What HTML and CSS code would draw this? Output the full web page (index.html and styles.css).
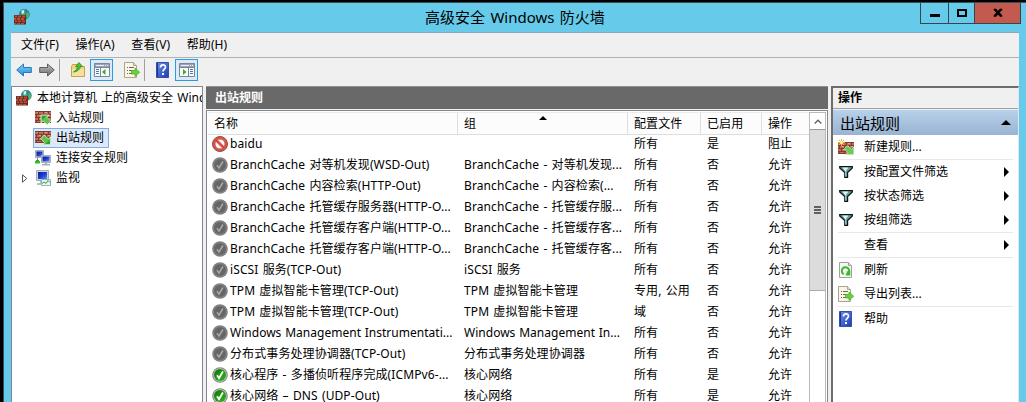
FILE: index.html
```html
<!DOCTYPE html>
<html lang="zh-CN">
<head>
<meta charset="utf-8">
<title>高级安全 Windows 防火墙</title>
<link rel="stylesheet" href="styles.css">
</head>
<body>
<svg class="defs" width="0" height="0">
  <defs>
    <linearGradient id="gGreen" x1="0" y1="0" x2="1" y2="1"><stop offset="0" stop-color="#0c6a08"/><stop offset=".5" stop-color="#1f9c10"/><stop offset="1" stop-color="#2fae1c"/></linearGradient>
    <linearGradient id="gBlue" x1="0" y1="0" x2="1" y2="1"><stop offset="0" stop-color="#6c92ee"/><stop offset="1" stop-color="#1d3cae"/></linearGradient>
    <linearGradient id="gScreen" x1="0" y1="0" x2="1" y2="1"><stop offset="0" stop-color="#0a1c9c"/><stop offset=".5" stop-color="#1a3ccc"/><stop offset="1" stop-color="#5e8cf0"/></linearGradient>
    <linearGradient id="gArrow" x1="0" y1="0" x2="0" y2="1"><stop offset="0" stop-color="#8ad4f8"/><stop offset="1" stop-color="#1c8ad8"/></linearGradient>
    <linearGradient id="gGray" x1="0" y1="0" x2="0" y2="1"><stop offset="0" stop-color="#bdbdbd"/><stop offset="1" stop-color="#6e6e6e"/></linearGradient>
    <symbol id="bricks" viewBox="0 0 16 12">
      <rect width="16" height="12" fill="#86392c"/>
      <path d="M0 1h3v2H0zM4 1h4v2H4zM9 1h4v2H9zM14 1h2v2h-2zM0 4h1v2H0zM2 4h4v2H2zM7 4h4v2H7zM12 4h4v2h-4zM0 7h3v2H0zM4 7h4v2H4zM9 7h4v2H9zM14 7h2v2h-2zM0 10h1v1H0zM2 10h4v1H2zM7 10h4v1H7zM12 10h4v1h-4z" fill="#b9705c"/>
      <path d="M2 1h1v1H2zM10 1h2v1h-2zM4 4h2v1H4zM5 7h2v1H5zM13 4h2v1h-2z" fill="#d9a48c"/>
    </symbol>
    <symbol id="firewall" viewBox="0 0 16 16">
      <circle cx="10.3" cy="5.4" r="5.1" fill="#2b7fc6" stroke="#2568a4" stroke-width=".5"/>
      <path d="M7 2c2-1.600 4-1.500 4.500-.8L10.600 3l1 1.500-2 1.800L7 5zM13 2.500l2 2v3l-1.500 2-1.500-2.500z" fill="#4cba3e"/>
      <path d="M7.500 1.800l2.500-.9v3L8 5z" fill="#d4f0f6"/>
      <path d="M0 6h12v9.500H0z" fill="#6e2a1e"/>
      <path d="M1 6.500h2v2H1zM4 6.500h3v2H4zM8 6.500h3v2H8zM0 9h2v2H0zM3 9h3v2H3zM7 9h3v2H7zM1 11.500h2v1.500H1zM4 11.500h3v1.500H4zM8 11.500h3v1.500H8zM0 14h2v1H0zM3 14h3v1H3zM7 14h3v1H7z" fill="#b0523d"/>
    </symbol>
    <symbol id="inbound" viewBox="0 0 16 16">
      <use href="#bricks" y="1" width="16" height="12"/>
      <path d="M6 5h8l-2.200 2.200 4 4-3.600 3.600-4-4L6 13z" fill="#5cc44a" stroke="#e4f4dc" stroke-width=".8"/>
      <path d="M7 6h4l-4 4z" fill="#2f9a2a"/>
    </symbol>
    <symbol id="outbound" viewBox="0 0 16 16">
      <use href="#bricks" y="1" width="16" height="12"/>
      <path d="M15.500 14.800h-8l2.200-2.200-4-4L9.300 5l4 4 2.200-2.200z" fill="#5cc44a" stroke="#e4f4dc" stroke-width=".8"/>
      <path d="M14.600 13.900h-4l4-4z" fill="#2f9a2a"/>
    </symbol>
    <symbol id="newrule" viewBox="0 0 16 16">
      <use href="#bricks" y="3" width="16" height="12"/>
      <path d="M15.700 15.700h-8l2.200-2.200-3.600-3.600 3.400-3.400 3.800 3.800 2.200-2.200z" fill="#66cc54" stroke="#e4f4dc" stroke-width=".7"/>
      <path d="M3.500 0v7M0 3.500h7M1 1l5 5M6 1L1 6" stroke="#f0b028"/><circle cx="3.500" cy="3.500" r="1.500" fill="#fff4a8"/>
    </symbol>
    <symbol id="connsec" viewBox="0 0 16 16">
      <path d="M.5.500h8v7h-8z" fill="#c6cad2" stroke="#aab"/><path d="M1.500 1.500h6v5h-6z" fill="url(#gScreen)"/>
      <path d="M6.500 5.500h9v7h-9z" fill="#d4d7de" stroke="#aab"/><path d="M7.500 6.500h7v5h-7z" fill="url(#gScreen)"/>
      <path d="M10 13h2v1h3v1.500H7V14h3z" fill="#a8acb4"/><path d="M0 11h5v2.500H0z" fill="#2fc02c"/><path d="M1 10h3v1H1z" fill="#27a824"/><path d="M2.500 8v2" stroke="#888"/>
    </symbol>
    <symbol id="monitor" viewBox="0 0 16 16">
      <path d="M1.500.500h12v10h-12z" fill="#d0d4dc" stroke="#a4aab6"/><path d="M3 2h9v7H3z" fill="url(#gScreen)"/>
      <path d="M5 11h4v2h2v2H2v-2h3z" fill="#b8bcc4"/>
      <path d="M6.500 9.500h9v6h-9z" fill="#eef6f8" stroke="#8fb4c4"/><path d="M7 13.500l2-1.500 2 1.500 2-3 2 2" fill="none" stroke="#28a828"/>
    </symbol>
    <symbol id="blocked" viewBox="0 0 16 16">
      <circle cx="8" cy="8" r="7.500" fill="#d8564a" stroke="#96483f"/><circle cx="8" cy="8" r="4.800" fill="#f4f2f2"/>
      <path d="M4 4l8 8" stroke="#dc4d40" stroke-width="2.600"/><circle cx="8" cy="8" r="5" fill="none" stroke="#a8483e" stroke-width=".5"/>
    </symbol>
    <symbol id="off" viewBox="0 0 16 16">
      <circle cx="8" cy="8" r="7.800" fill="#818181"/><circle cx="8" cy="8" r="6.200" fill="#666" stroke="#8d8d8d" stroke-width=".5"/>
      <path d="M5 8.300l2 2.900 3.900-6.700" fill="none" stroke="#aaa" stroke-width="1.500"/>
    </symbol>
    <symbol id="on" viewBox="0 0 16 16">
      <circle cx="8" cy="8" r="7.800" fill="#858585"/><circle cx="8" cy="8" r="6.700" fill="#ccc"/><circle cx="8" cy="8" r="6" fill="url(#gGreen)"/>
      <path d="M5 8.300l2 2.900 3.900-6.700" fill="none" stroke="#fff" stroke-width="1.800"/>
    </symbol>
    <symbol id="back" viewBox="0 0 16 14"><path d="M.7 7l6.800-6v3.500h7.800v5H7.500V13z" fill="url(#gArrow)" stroke="#2878b8"/></symbol>
    <symbol id="forward" viewBox="0 0 16 14"><path d="M15.300 7L8.500 1v3.500H.7v5h7.800V13z" fill="url(#gGray)" stroke="#606060"/></symbol>
    <symbol id="folder" viewBox="0 0 16 16">
      <path d="M1.500 4.500l1-2h5l1 2h6v10h-13z" fill="#efd381" stroke="#c7a34b"/><path d="M2 7h12v7H2z" fill="#f5e0a0"/>
      <path d="M3.500 10c2-1 3.500-3 4-5.500H5.500L9 .5l3.500 4h-2C10 7.500 7 10 3.500 10z" fill="#48be30" stroke="#238a18" stroke-width=".7"/>
    </symbol>
    <symbol id="treepane" viewBox="0 0 16 14">
      <path d="M.5.500h15v13H.5z" fill="#fafafa" stroke="#7e8592"/><path d="M1 1h14v3H1z" fill="#9aa4b4"/><path d="M2 2.500h8M11 2.500h1M13 2.500h1" stroke="#eef"/><path d="M1 4.500h14M6.500 5v8" stroke="#7e8592"/>
      <path d="M2 6.500h3M2 8.500h3M2 10.500h3" stroke="#4878b0"/><path d="M11.500 6v6L8 9z" fill="#36ac28"/>
    </symbol>
    <symbol id="actionpane" viewBox="0 0 16 14">
      <path d="M.5.500h15v13H.5z" fill="#fafafa" stroke="#7e8592"/><path d="M1 1h14v3H1z" fill="#9aa4b4"/><path d="M2 2.500h8M11 2.500h1M13 2.500h1" stroke="#eef"/><path d="M1 4.500h14M9.500 5v8" stroke="#7e8592"/>
      <path d="M11 6.500h3M11 8.500h3M11 10.500h3" stroke="#4878b0"/><path d="M4 6v6l3.500-3z" fill="#36ac28"/>
    </symbol>
    <symbol id="export" viewBox="0 0 16 16">
      <path d="M.5.500h9l3 3v12H.5z" fill="#fbf6e2" stroke="#aaa494"/><path d="M9.500.500v3h3" fill="#ddd" stroke="#aaa494"/>
      <path d="M3 5.500h1M3 8.500h1M3 11.500h1M5 5.500h5M5 8.500h3M5 11.500h3" stroke="#666"/>
      <path d="M7.500 8.500H11V6l4.700 4.200-4.700 4.300V12H7.500z" fill="#6ad238" stroke="#46a828" stroke-width=".7"/>
    </symbol>
    <symbol id="help" viewBox="0 0 13 16"><path d="M.5.500h12v15H.5z" fill="url(#gBlue)" stroke="#3450a8"/><path d="M1.500 1v14" stroke="#1c3590"/><path d="M4.500 5.500c0-3.500 5-3.500 5-.5 0 2.200-2.500 2-2.500 4.500" fill="none" stroke="#fff" stroke-width="1.700"/><path d="M6 11h2v2H6z" fill="#fff"/></symbol>
    <symbol id="refresh" viewBox="0 0 13 16">
      <path d="M.5.500h9l3 3v12H.5z" fill="#f6f6f6" stroke="#a0a0a0"/><path d="M9.500.500v3h3" fill="#ddd" stroke="#a0a0a0"/>
      <path d="M4.800 12.200A3.700 3.700 0 1 1 9.600 11" fill="none" stroke="#3cb82c" stroke-width="2"/><path d="M6.800 9.300h4.500v4.200H6.800z" fill="#3cb82c"/><path d="M6 9.300l2 .2-.5 2.500z" fill="#f6f6f6"/>
    </symbol>
    <symbol id="filter" viewBox="0 0 14 12"><path d="M.7.700h12.600v1.200L8.600 6.500v4.800H5.800V6.500L.7 1.900z" fill="#5fa3a6" stroke="#111" stroke-width="1.200"/><path d="M3.500 1.600h6L7 4.600v5.800h-.6V5.500z" fill="#e8f4f4"/></symbol>
    <symbol id="right" viewBox="0 0 5 10"><path d="M0 0l5 5-5 5z"/></symbol>
    <symbol id="up" viewBox="0 0 10 5"><path d="M0 5l5-5 5 5z"/></symbol>
  </defs>
</svg>
<div class="window">
  <header class="titlebar">
    <svg class="app-icon"><use href="#firewall"/></svg>
    <h1 class="caption">高级安全 Windows 防火墙</h1>
    <div class="controls">
      <span class="control"><svg width="10" height="12"><path d="M0 8h10v3H0z"/></svg></span>
      <span class="control maximize"><svg width="10" height="12"><path d="M1 4h8v6H1z" fill="none" stroke="#000" stroke-width="2"/></svg></span>
      <span class="control close"><svg width="10" height="12"><path d="M1 3h2l2 2.200L7 3h2v1L6.500 6.500 9 9.500v1H7L5 8.200l-2 2.300H1v-1l2.500-3L1 4z" stroke="#000" stroke-width=".6"/></svg></span>
    </div>
  </header>
  <div class="client">
    <nav class="menubar"><span>文件(F)</span><span>操作(A)</span><span>查看(V)</span><span>帮助(H)</span></nav>
    <div class="toolbar">
      <svg class="i-arrow"><use href="#back"/></svg>
      <svg class="i-arrow i-forward"><use href="#forward"/></svg>
      <i class="sep"></i>
      <svg class="i16 i-folder"><use href="#folder"/></svg>
      <span class="toggle"><svg class="i-pane"><use href="#treepane"/></svg></span>
      <svg class="i16 i-export"><use href="#export"/></svg>
      <i class="sep sep-last"></i>
      <svg class="i-help"><use href="#help"/></svg>
      <span class="toggle toggle-last"><svg class="i-pane"><use href="#actionpane"/></svg></span>
    </div>
    <main class="panes">
      <section class="tree">
        <div class="node root"><svg class="i16"><use href="#firewall"/></svg><span class="root-name">本地计算机 上的高级安全 Windows</span></div>
        <div class="node"><svg class="i16"><use href="#inbound"/></svg><span>入站规则</span></div>
        <div class="node"><div class="selected"><svg class="i16"><use href="#outbound"/></svg><span>出站规则</span></div></div>
        <div class="node"><svg class="i16"><use href="#connsec"/></svg><span>连接安全规则</span></div>
        <div class="node expandable"><svg class="expander" viewBox="0 0 6 9"><path d="M.5.800v7.400L4.800 4.500z" fill="#fff" stroke="#555"/></svg><svg class="i16"><use href="#monitor"/></svg><span>监视</span></div>
      </section>
      <section class="rules">
        <h2 class="pane-title">出站规则</h2>
        <div class="list">
          <div class="grid">
            <div class="row head"><span>名称</span><span>组<svg class="sort" viewBox="0 0 8 4"><path d="M0 4l4-4 4 4z"/></svg></span><span>配置文件</span><span>已启用</span><span>操作</span></div>
            <div class="row"><span><svg class="i16"><use href="#blocked"/></svg>baidu</span><span></span><span>所有</span><span>是</span><span>阻止</span></div>
            <div class="row"><span><svg class="i16"><use href="#off"/></svg>BranchCache 对等机发现(WSD-Out)</span><span>BranchCache - 对等机发现...</span><span>所有</span><span>否</span><span>允许</span></div>
            <div class="row"><span><svg class="i16"><use href="#off"/></svg>BranchCache 内容检索(HTTP-Out)</span><span>BranchCache - 内容检索(...</span><span>所有</span><span>否</span><span>允许</span></div>
            <div class="row"><span><svg class="i16"><use href="#off"/></svg>BranchCache 托管缓存服务器(HTTP-O...</span><span>BranchCache - 托管缓存服...</span><span>所有</span><span>否</span><span>允许</span></div>
            <div class="row"><span><svg class="i16"><use href="#off"/></svg>BranchCache 托管缓存客户端(HTTP-O...</span><span>BranchCache - 托管缓存客...</span><span>所有</span><span>否</span><span>允许</span></div>
            <div class="row"><span><svg class="i16"><use href="#off"/></svg>BranchCache 托管缓存客户端(HTTP-O...</span><span>BranchCache - 托管缓存客...</span><span>所有</span><span>否</span><span>允许</span></div>
            <div class="row"><span><svg class="i16"><use href="#off"/></svg>iSCSI 服务(TCP-Out)</span><span>iSCSI 服务</span><span>所有</span><span>否</span><span>允许</span></div>
            <div class="row"><span><svg class="i16"><use href="#off"/></svg>TPM 虚拟智能卡管理(TCP-Out)</span><span>TPM 虚拟智能卡管理</span><span>专用, 公用</span><span>否</span><span>允许</span></div>
            <div class="row"><span><svg class="i16"><use href="#off"/></svg>TPM 虚拟智能卡管理(TCP-Out)</span><span>TPM 虚拟智能卡管理</span><span>域</span><span>否</span><span>允许</span></div>
            <div class="row tight"><span><svg class="i16"><use href="#off"/></svg>Windows Management Instrumentati...</span><span>Windows Management In...</span><span>所有</span><span>否</span><span>允许</span></div>
            <div class="row"><span><svg class="i16"><use href="#off"/></svg>分布式事务处理协调器(TCP-Out)</span><span>分布式事务处理协调器</span><span>所有</span><span>否</span><span>允许</span></div>
            <div class="row"><span><svg class="i16"><use href="#on"/></svg>核心程序 - 多播侦听程序完成(ICMPv6-...</span><span>核心网络</span><span>所有</span><span>是</span><span>允许</span></div>
            <div class="row"><span><svg class="i16"><use href="#on"/></svg>核心网络 – DNS (UDP-Out)</span><span>核心网络</span><span>所有</span><span>是</span><span>允许</span></div>
          </div>
          <div class="scrollbar">
            <div class="scroll-up"><svg width="8" height="5" viewBox="0 0 8 5"><path d="M.7 4.500L4 1.200l3.300 3.300" fill="none" stroke="#606060" stroke-width="1.300"/></svg></div>
            <div class="thumb"><i></i><i></i><i></i></div>
          </div>
        </div>
      </section>
      <aside class="actions">
        <h2 class="actions-title">操作</h2>
        <div class="group"><span>出站规则</span><svg class="i-up"><use href="#up"/></svg></div>
        <div class="action first"><svg class="i16"><use href="#newrule"/></svg><span>新建规则...</span></div>
        <div class="action ruled"><svg class="i-filter"><use href="#filter"/></svg><span>按配置文件筛选</span><svg class="i-right"><use href="#right"/></svg></div>
        <div class="action"><svg class="i-filter"><use href="#filter"/></svg><span>按状态筛选</span><svg class="i-right"><use href="#right"/></svg></div>
        <div class="action"><svg class="i-filter"><use href="#filter"/></svg><span>按组筛选</span><svg class="i-right"><use href="#right"/></svg></div>
        <div class="action ruled"><b class="no-icon"></b><span>查看</span><svg class="i-right"><use href="#right"/></svg></div>
        <div class="action ruled"><svg class="i-help"><use href="#refresh"/></svg><span>刷新</span></div>
        <div class="action"><svg class="i16"><use href="#export"/></svg><span>导出列表...</span></div>
        <div class="action ruled"><svg class="i-help"><use href="#help"/></svg><span>帮助</span></div>
      </aside>
    </main>
  </div>
</div>
</body>
</html>
```

FILE: styles.css
```css
* { box-sizing: border-box; }
html, body { height: 100%; margin: 0; overflow: hidden; }
body {
  padding: 2px 0 0 3px;
  background: #000;
  color: #000;
  font: 12px/20px "Noto Sans", "Noto Sans CJK SC", sans-serif;
  white-space: nowrap;
}
svg { display: block; flex: none; }
.defs { position: absolute; }
h1, h2 { margin: 0; font-weight: normal; }

.window {
  display: flex;
  flex-direction: column;
  height: 400px;
  padding: 0 7px 0 7px;
  background: #66cbea;
  border-top: 1px solid #3a4f57;
  border-left: 1px solid #3a4f57;
}
.titlebar { display: flex; height: 29px; }
.app-icon { width: 16px; height: 16px; margin: 6px 0 0 3px; }
.caption { flex: 1; padding-left: 395px; font-size: 15px; line-height: 29px; word-spacing: 1.5px; }
.controls { display: flex; height: 21px; margin-right: -2px; border: 1px solid #34454c; border-top: 0; }
.control { display: flex; width: 27px; justify-content: center; padding-top: 3px; }
.maximize { width: 26px; border-left: 1px solid #34454c; }
.close { width: 46px; border-left: 1px solid #34454c; background: #c35a50; }

.client { flex: 1; min-height: 0; display: flex; flex-direction: column; background: #f0f0f0; border-top: 1px solid #8aa9b5; }
.menubar { display: flex; gap: 16.5px; height: 24px; padding-left: 10px; line-height: 24px; letter-spacing: .1px; }
.toolbar { display: flex; align-items: center; height: 29px; padding: 0 0 5px 5px; border-top: 1px solid #b2b2b2; }
.i16 { width: 16px; height: 16px; }
.i-arrow { width: 16px; height: 14px; }
.i-forward { margin-left: 7px; }
.sep { width: 1px; height: 22px; margin-left: 4px; background: #a0a0a0; }
.i-folder { margin-left: 10px; }
.toggle { display: flex; align-items: center; justify-content: center; width: 23px; height: 22px; margin-left: 4px; background: #d9ebf9; border: 1px solid #2a9be0; }
.i-pane { width: 16px; height: 14px; }
.i-export { margin-left: 11px; }
.sep-last { margin-left: 4px; }
.i-help { width: 13px; height: 16px; }
.toolbar .i-help { margin-left: 11px; }
.toggle-last { margin-left: 6px; }

.panes { flex: 1; min-height: 0; display: flex; }
.tree { width: 192px; padding-top: 1px; overflow: hidden; background: #fff; border: 1px solid #828790; border-bottom: 0; }
.node { display: flex; align-items: center; height: 20px; padding-left: 23px; gap: 5px; }
.root { padding-left: 4px; }
.root-name { flex: 1; min-width: 0; overflow: hidden; word-spacing: 1px; }
.selected { display: flex; align-items: center; gap: 5px; height: 20px; margin-left: -2px; padding: 0 4px 0 1px; background: #dbeafb; border: 1px solid #84acdd; }
.expandable { padding-left: 10px; gap: 5px; }
.expander { width: 6px; height: 9px; margin-right: 2px; }

.rules { display: flex; flex-direction: column; width: 622px; margin-left: 3px; }
.pane-title { height: 23px; padding-left: 9px; background: #696969; border-top: 1px solid #8e9298; color: #fff; font-size: 12px; font-weight: bold; line-height: 22px; }
.list { display: flex; flex: 1; min-height: 0; margin-top: 1px; padding: 1px 1px 0 1px; background: #fff; border: 1px solid #828790; border-bottom: 0; }
.grid { width: 601px; overflow: hidden; }
.row { display: grid; grid-template-columns: 250px 170px 73px 61px 47px; height: 21px; line-height: 21px; letter-spacing: .1px; word-spacing: 1px; }
.tight { letter-spacing: .02px; word-spacing: .6px; }
.row > span { display: flex; align-items: center; min-width: 0; padding-left: 6px; }
.row > span:first-child { padding-left: 4px; gap: 2px; }
.head > span { background: #fcfcfc; border-right: 1px solid #dedede; border-bottom: 1px solid #dedede; border-top: 1px solid #ececec; }
.head > span:first-child { padding-left: 6px; }
.head > span:last-child { border-right: 0; }
.sort { width: 8px; height: 4px; margin: -11px 0 0 63px; }
.scrollbar { width: 17px; background: #fff; border-left: 1px solid #bababa; border-right: 1px solid #bababa; }
.scroll-up { display: flex; align-items: center; justify-content: center; height: 17px; border-top: 1px solid #bababa; }
.thumb { display: flex; flex-direction: column; align-items: center; justify-content: center; gap: 1px; height: 162px; background: #dcdcdc; border-top: 1px solid #999; border-bottom: 1px solid #aaa; }
.thumb i { width: 7px; height: 2px; background: #606060; }

.actions { flex: 1; margin-left: 3px; background: #fff; border: solid #6d6d6d; border-width: 2px 0 0 2px; border-right: 1px solid #e6e6e6; }
.actions-title { height: 21px; padding-left: 5px; background: #f0f0f0; border-bottom: 1px solid #a0a0a0; font-size: 12px; font-weight: bold; line-height: 20px; }
.group { display: flex; align-items: center; justify-content: space-between; height: 26px; padding: 0 7px 0 7px; background: linear-gradient(#b9d1ea, #98b4d2); border-top: 1px solid #e9eff6; font-size: 15px; line-height: 22px; }
.i-up { width: 10px; height: 5px; }
.action { display: flex; align-items: center; height: 24px; margin: 0 5px; }
.action > svg:first-child, .no-icon { margin-right: 10px; }
.action > .i16:first-child { margin-right: 10px; }
.action > .i-filter:first-child { margin: 0 11px 0 1px; }
.action > .i-help:first-child { margin: 0 12px 0 1px; }
.action > span { flex: 1; }
.no-icon { width: 16px; }
.i-filter { width: 14px; height: 12px; }
.i-right { width: 5px; height: 10px; margin-right: 4px; }
.ruled { height: 25px; border-top: 1px solid #e8e8e8; }
```
